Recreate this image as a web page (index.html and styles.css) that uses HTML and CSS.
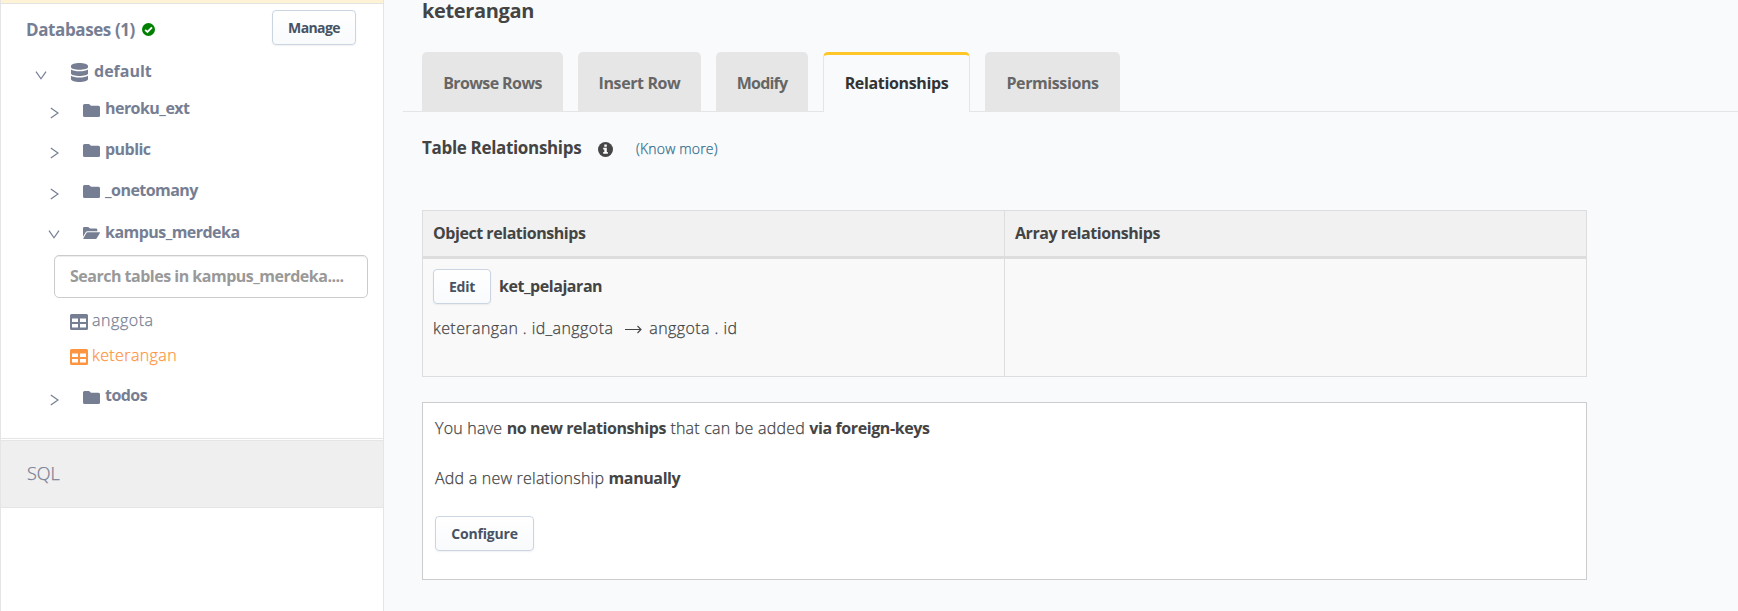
FILE: index.html
```
<!DOCTYPE html>
<html lang="en">
<head>
<meta charset="utf-8">
<title>keterangan - Relationships</title>
<link rel="stylesheet" href="styles.css">
</head>
<body>
<svg class="defs" width="0" height="0">
  <symbol id="down" viewBox="0 0 12 9"><path d="M1 .7 6 7.8 11 .7" fill="none" stroke="currentColor" stroke-width="1.2"/></symbol>
  <symbol id="right" viewBox="0 0 9 12"><path d="M.8 1 8 6 .8 11" fill="none" stroke="currentColor" stroke-width="1.2"/></symbol>
  <symbol id="folder" viewBox="0 0 17 13"><path d="M1.5 0H6l2 1.7h7.5A1.5 1.5 0 0 1 17 3.200v8.300a1.500 1.500 0 0 1-1.500 1.500h-14A1.500 1.500 0 0 1 0 11.500v-10A1.500 1.500 0 0 1 1.500 0z" fill="currentColor"/></symbol>
  <symbol id="open" viewBox="0 0 17 12"><path d="M0 9.800V1.300A1.300 1.300 0 0 1 1.300 0h4l1.700 1.600h6A1.300 1.300 0 0 1 14.300 3v1.300H4.500A2 2 0 0 0 2.700 5.300zM.9 12h11.600a1.500 1.500 0 0 0 1.300-.7l3.100-5.300a.5.5 0 0 0-.4-.8H4.700a1.500 1.500 0 0 0-1.300.8L.4 11.200A.5.5 0 0 0 .9 12z" fill="currentColor"/></symbol>
  <symbol id="table" viewBox="0 0 18 16"><path fill-rule="evenodd" d="M1.500 0h15A1.500 1.500 0 0 1 18 1.500v13a1.500 1.500 0 0 1-1.500 1.500h-15A1.500 1.500 0 0 1 0 14.500v-13A1.500 1.500 0 0 1 1.500 0zM2 4.500V8h6V4.500zM10 4.500V8h6V4.500zM2 10v3.500h6V10zM10 10v3.500h6V10z" fill="currentColor"/></symbol>
</svg>
<div class="page">
  <aside class="sidebar">
    <div class="notice"></div>
    <div class="side-head">
      <span class="side-title">Databases (1)</span>
      <svg class="check" viewBox="0 0 12 12"><circle cx="6" cy="6" r="6" fill="#008000"/><path d="M2.900 6.300 5 8.300 9.200 4" fill="none" stroke="#fff" stroke-width="1.700"/></svg>
      <button class="btn manage">Manage</button>
    </div>
    <div class="row source">
      <svg class="down"><use href="#down"/></svg>
      <svg class="db" viewBox="0 0 17 19"><path d="M0 3C0-.9 17-.9 17 3v1.200C17 7.500 0 7.500 0 4.200zM0 6.500c3 2.400 14 2.400 17 0v4c0 3.300-17 3.300-17 0zM0 12.800c3 2.400 14 2.400 17 0V16c0 3.900-17 3.900-17 0z" fill="currentColor"/></svg>
      <span class="t-default">default</span>
    </div>
    <div class="row schema heroku"><svg class="right"><use href="#right"/></svg><svg class="folder"><use href="#folder"/></svg><span>heroku_ext</span></div>
    <div class="row schema"><svg class="right"><use href="#right"/></svg><svg class="folder"><use href="#folder"/></svg><span>public</span></div>
    <div class="row schema"><svg class="right"><use href="#right"/></svg><svg class="folder"><use href="#folder"/></svg><span>_onetomany</span></div>
    <div class="row schema expanded"><svg class="down"><use href="#down"/></svg><svg class="open"><use href="#open"/></svg><span>kampus_merdeka</span></div>
    <input class="search" placeholder="Search tables in kampus_merdeka....">
    <div class="row item"><svg class="table-icon"><use href="#table"/></svg><span class="t-anggota">anggota</span></div>
    <div class="row item current"><svg class="table-icon"><use href="#table"/></svg><span>keterangan</span></div>
    <div class="row schema todos"><svg class="right"><use href="#right"/></svg><svg class="folder"><use href="#folder"/></svg><span>todos</span></div>
    <div class="sql">SQL</div>
  </aside>
  <main class="main">
    <h2 class="heading">keterangan</h2>
    <nav class="tabs">
      <a class="tab browse">Browse Rows</a>
      <a class="tab insert">Insert Row</a>
      <a class="tab modify">Modify</a>
      <a class="tab active">Relationships</a>
      <a class="tab permissions">Permissions</a>
    </nav>
    <div class="subhead">
      <h4 class="subtitle">Table Relationships</h4>
      <svg class="info" viewBox="0 0 15 15"><circle cx="7.500" cy="7.500" r="7.500" fill="#464646"/><path d="M6.300 2.500h2.500v2.200H6.300zM5.200 5.800h3.600v4.300h1v1.700H5.200v-1.700h1.100V7.500H5.200z" fill="#fff"/></svg>
      <a class="know">(Know more)</a>
    </div>
    <div class="rel-table">
      <div class="th">Object relationships</div>
      <div class="th">Array relationships</div>
      <div class="td">
        <div class="rel-name"><button class="btn edit">Edit</button><b class="ket">ket_pelajaran</b></div>
        <div class="mapping"><span>keterangan . id_anggota</span><svg class="arrow" viewBox="0 0 17 9"><path d="M0 4.500H16M12.500 1 16 4.500 12.500 8" fill="none" stroke="currentColor" stroke-width="1.100"/></svg><span>anggota . id</span></div>
      </div>
      <div class="td"></div>
    </div>
    <section class="add-box">
      <p class="line">You have <b>no new relationships</b> that can be added <b>via foreign-keys</b></p>
      <p class="line second">Add a new relationship <b>manually</b></p>
      <button class="btn configure">Configure</button>
    </section>
  </main>
</div>
</body>
</html>
```
FILE: styles.css
```
* { box-sizing: border-box; }
body { margin: 0; font: 300 16px/22px "Open Sans", "Noto Sans", sans-serif; color: #444; background: #f9fafc; }
.defs { position: absolute; }
.page { display: flex; height: 611px; overflow: hidden; }
svg { flex: none; display: block; }
b { font-weight: 700; -webkit-text-stroke: 0; }

.sidebar { width: 384px; flex: none; background: #fff; border: solid #e5e5e5; border-width: 0 1px; color: #767e93; }
.notice { height: 4px; background: #fff3d5; border-bottom: 1px solid #e3e3e3; }
.side-head { display: flex; align-items: center; height: 51px; padding: 0 27px 4px 25px; }
.side-title { margin-top: 4px; font-size: 17px; font-weight: 700; letter-spacing: -.4px; }
.check { width: 13px; height: 13px; margin-left: 7px; margin-top: 4px; }
.btn { height: 35px; padding: 0; border: 1px solid #cbd5e1; border-radius: 4px; background: linear-gradient(#fff, #f8fafc); box-shadow: 0 1px 2px rgba(0, 0, 0, .06); font: 700 14px "Open Sans", sans-serif; color: #475364; }
.manage { width: 84px; margin-left: auto; letter-spacing: -.6px; }

.row { display: flex; align-items: center; font-weight: 700; }
.down { width: 12px; height: 9px; margin-top: 6px; }
.right { width: 9px; height: 12px; margin-top: 9px; }
.source { height: 34px; padding-left: 34px; }
.db { width: 17px; height: 19px; margin: 1px 6px 0 24px; }
.source .t-default { margin-bottom: 2px; letter-spacing: 0; }
.schema { height: 41px; padding-left: 49px; letter-spacing: -.54px; }
.heroku { height: 39px; }
.heroku span { margin-bottom: 2px; }
.folder { width: 17px; height: 13px; margin: 4px 5px 0 24px; }
.expanded { height: 43px; padding-left: 47px; }
.open { width: 17px; height: 12px; margin: 2px 5px 0 23px; }
.search { display: block; width: 314px; height: 43px; margin: 2px 0 5px 53px; padding: 0 15px 1px; border: 1px solid #ccc; border-radius: 5px; box-shadow: inset 0 1px 1px rgba(0, 0, 0, .075); font: 700 16px "Open Sans", sans-serif; letter-spacing: -.5px; }
.search::placeholder { color: #999; opacity: 1; }
.item { height: 35px; padding-left: 69px; font-weight: 300; letter-spacing: .4px; -webkit-text-stroke: .25px; }
.item span { margin-bottom: 1px; }
.t-anggota { letter-spacing: .55px; }
.table-icon { width: 18px; height: 16px; margin: 3px 4px 0 0; }
.current { color: #fd9540; }
.todos { height: 44px; margin-bottom: 21px; }
.todos span { margin-bottom: 1px; }
.sql { height: 70px; padding: 0 26px; border: solid #e5e5e5; border-width: 1px 0; background: #efefef; box-shadow: inset 0 1px #fff, inset 0 2px #e5e5e5; font-size: 18px; line-height: 68px; -webkit-text-stroke: .25px; }

.main { flex: 1; display: flex; flex-direction: column; padding-left: 19px; }
.heading { margin: 0 0 31px 19px; height: 21px; font-size: 20px; line-height: 21px; font-weight: 700; letter-spacing: -.35px; }
.tabs { display: flex; gap: 15px; height: 60px; padding-left: 19px; background: linear-gradient(#e5e5e5, #e5e5e5) 0 100% / 100% 1px no-repeat; }
.tab { height: 59px; border-radius: 5px 5px 0 0; background: #e6e6e6; color: #666; font-weight: 700; line-height: 62px; text-align: center; }
.browse { width: 141px; letter-spacing: -.6px; }
.insert { width: 123px; letter-spacing: -.4px; }
.modify { width: 92px; letter-spacing: -.8px; }
.active { width: 147px; height: 60px; border: 1px solid #e5e5e5; border-top: 3px solid #ffc627; border-bottom: 0; background: #f9fafc; color: #333; line-height: 56px; letter-spacing: -.35px; }
.permissions { width: 135px; letter-spacing: -.4px; }
.subhead { display: flex; align-items: center; height: 24px; margin: 24px 0 0 19px; }
.subtitle { width: 176px; margin: 0 0 1px; font-size: 17px; font-weight: 700; letter-spacing: -.33px; }
.info { width: 15px; height: 15px; margin: 3px 23px 0 0; }
.know { font-size: 14px; color: #34708f; margin-top: 1px; letter-spacing: .18px; -webkit-text-stroke: .25px; }

.rel-table { display: grid; grid-template-columns: 582px 582px; grid-template-rows: 48px 118px; width: 1165px; margin: 50px 0 0 19px; border: solid #ddd; border-width: 1px 0 0 1px; }
.th { padding-left: 10px; border-right: 1px solid #ddd; border-bottom: 3px solid #ddd; background: #f1f1f1; font-weight: 700; line-height: 44px; letter-spacing: -.45px; }
.td { padding: 10px 0 0 10px; border: solid #ddd; border-width: 0 1px 1px 0; background: #f9f9f9; }
.rel-name { display: flex; align-items: center; }
.edit { width: 58px; padding-bottom: 1px; margin-right: 8px; letter-spacing: -.3px; }
.ket { margin-bottom: 2px; letter-spacing: -.45px; }
.mapping { display: flex; align-items: center; margin-top: 13px; letter-spacing: .42px; -webkit-text-stroke: .25px; }
.arrow { width: 17px; height: 9px; margin: 3px 7px 0 12px; }
.add-box { width: 1165px; height: 178px; margin: 25px 0 0 19px; padding: 14px 12px; border: 1px solid #ccc; background: #fff; }
.line { margin: 0; letter-spacing: .22px; -webkit-text-stroke: .25px; }
.line b { letter-spacing: -.4px; }
.second { margin: 28px 0 27px; }
.configure { width: 99px; letter-spacing: -.2px; }
```
